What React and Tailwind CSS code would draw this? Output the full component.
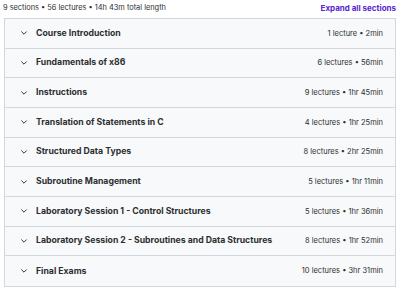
import React from "react";

const sections = [
  ["Course Introduction", "1 lecture • 2min"],
  ["Fundamentals of x86", "6 lectures • 56min"],
  ["Instructions", "9 lectures • 1hr 45min"],
  ["Translation of Statements in C", "4 lectures • 1hr 25min"],
  ["Structured Data Types", "8 lectures • 2hr 25min"],
  ["Subroutine Management", "5 lectures • 1hr 11min"],
  ["Laboratory Session 1 - Control Structures", "5 lectures • 1hr 36min"],
  ["Laboratory Session 2 - Subroutines and Data Structures", "8 lectures • 1hr 52min"],
  ["Final Exams", "10 lectures • 3hr 31min"],
];

function Chevron() {
  return (
    <svg width="8" height="8" viewBox="0 0 10 10" className="shrink-0">
      <path d="M2 3.5 L5 6.5 L8 3.5" fill="none" stroke="#2d2f31" strokeWidth="1.2" strokeLinecap="round" strokeLinejoin="round" />
    </svg>
  );
}

export default function App() {
  return (
    <div className="w-[400px] h-[290px] bg-white text-[#2d2f31]" style={{ fontFamily: "Inter, 'Noto Sans', sans-serif" }}>
      <div className="flex items-center justify-between pl-[3px] pr-[4px] h-[15px] pt-[1px]">
        <span className="text-[7.4px] text-[#2d2f31]">9 sections • 56 lectures • 14h 43m total length</span>
        <span className="text-[8px] font-bold text-[#5624d0]">Expand all sections</span>
      </div>
      <div className="mx-[4px] mt-[3px] border border-[#d1d7dc]">
        {sections.map(([t, m], i) => (
          <div
            key={i}
            className={`flex items-center h-[29.67px] bg-[#f7f9fa] pl-[15px] pr-[12px] ${i < sections.length - 1 ? "border-b border-[#d1d7dc]" : ""}`}
          >
            <Chevron />
            <span className="ml-[8px] text-[8.7px] font-bold flex-1">{t}</span>
            <span className="text-[7.5px] text-[#2d2f31]">{m}</span>
          </div>
        ))}
      </div>
    </div>
  );
}
